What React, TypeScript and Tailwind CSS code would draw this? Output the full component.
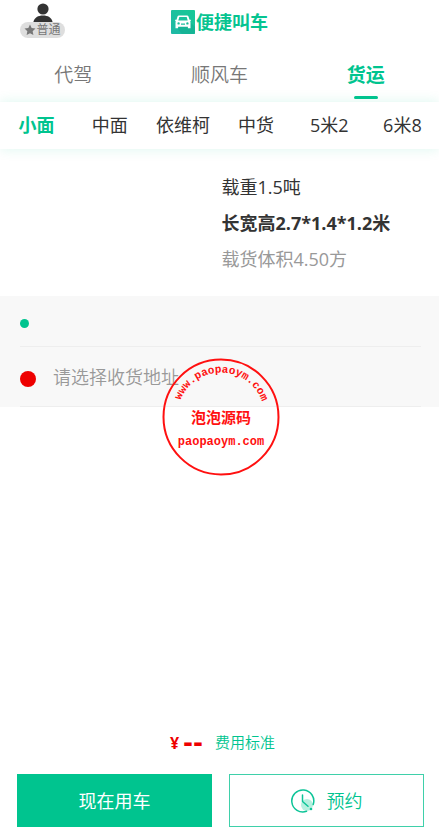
import { useState } from "react";

const services = ["代驾", "顺风车", "货运"];
const trucks = ["小面", "中面", "依维柯", "中货", "5米2", "6米8"];

function UserBadge() {
  return (
    <button type="button" className="flex flex-col items-center">
      <svg viewBox="0 0 20 19" className="h-[19px] w-5" fill="#333333">
        <circle cx="10" cy="6" r="5.6" />
        <path d="M0.4 19C1.6 14.6 5 12.6 10 12.6S18.4 14.6 19.6 19Z" />
      </svg>
      <span className="flex h-4 w-[45px] items-center justify-center rounded-full bg-[#dedede] text-xs text-[#777777]">
        <svg viewBox="0 0 24 24" className="h-3 w-3 shrink-0" fill="#777777">
          <path d="M12 1l3.3 7.2 7.7.9-5.700 5.300 1.500 7.800L12 18.300 5.200 22.200l1.500-7.800L1 9.100l7.700-.9z" />
        </svg>
        普通
      </span>
    </button>
  );
}

function Logo() {
  return (
    <div className="flex items-center gap-px">
      <svg viewBox="0 0 24 24" className="h-6 w-6">
        <defs>
          <linearGradient id="logoFill" x1="0" y1="1" x2="1" y2="0">
            <stop offset="0" stopColor="#1fb8a6" />
            <stop offset="1" stopColor="#16c995" />
          </linearGradient>
        </defs>
        <rect width="24" height="24" rx="1" fill="url(#logoFill)" />
        <path d="M19 12l5 5v7H11l-5-6z" fill="#0fa98c" opacity="0.5" />
        <path
          fillRule="evenodd"
          fill="#ffffff"
          d="M8 5.500h8c.8 0 1.300.4 1.500 1.100l1 3.200h1.300v1.400h-.8c.4.5.5 1 .5 1.600v5.400h-2.600v-1.500H7.100v1.500H4.500v-5.400c0-.6.100-1.100.5-1.600h-.8V9.800h1.300l1-3.200C6.700 5.900 7.200 5.500 8 5.500zM8.300 7l-1 3.400h9.400L15.700 7zM7.600 12.200a1.200 1.200 0 100 2.400 1.200 1.200 0 000-2.400zm8.800 0a1.200 1.200 0 100 2.400 1.200 1.200 0 000-2.400zM10 13.600v1.200h4v-1.200z"
        />
      </svg>
      <h1 className="text-lg leading-6 font-bold text-[#06c491]">便捷叫车</h1>
    </div>
  );
}

function Stamp() {
  return (
    <svg
      viewBox="0 0 118 118"
      className="h-[118px] w-[118px]"
      fill="#ff1010"
    >
      <defs>
        <path id="stampArc" d="M15.500 58A43.500 43.500 0 0 1 102.500 58" />
      </defs>
      <circle cx="59" cy="59" r="57.500" fill="none" stroke="#ff1010" strokeWidth="2" />
      <text
        fontFamily="'Liberation Mono', monospace"
        fontWeight="700"
        fontSize="11"
      >
        <textPath href="#stampArc" startOffset="16">
          www.paopaoym.com
        </textPath>
      </text>
      <text
        x="59"
        y="65"
        textAnchor="middle"
        fontFamily="'Noto Sans CJK SC', sans-serif"
        fontWeight="700"
        fontSize="15"
      >
        泡泡源码
      </text>
      <text
        x="59"
        y="87"
        textAnchor="middle"
        fontFamily="'Liberation Mono', monospace"
        fontWeight="700"
        fontSize="12"
      >
        paopaoym.com
      </text>
    </svg>
  );
}

function ClockIcon() {
  return (
    <svg viewBox="0 0 24 24" className="h-6 w-6" fill="none">
      <circle cx="16" cy="16" r="6" fill="#b5f0df" />
      <path
        d="M15.500 22.300A11 11 0 1 1 22.200 15.500"
        stroke="#0cc497"
        strokeWidth="1.500"
        strokeLinecap="round"
      />
      <path
        d="M11.500 6v6.500l5.500 4.700"
        stroke="#0cc497"
        strokeWidth="1.500"
        strokeLinecap="round"
        strokeLinejoin="round"
      />
      <circle cx="20" cy="20" r="1.300" fill="#0cc497" />
    </svg>
  );
}

function App() {
  const [service, setService] = useState("货运");
  const [truck, setTruck] = useState("小面");

  return (
    <div className="flex min-h-screen flex-col bg-white font-['Open_Sans','Noto_Sans_CJK_SC',sans-serif] text-lg font-normal text-[#333333]">
      <header className="grid h-[50px] grid-cols-[1fr_auto_1fr] items-start px-5">
        <div className="flex pt-[3px]">
          <UserBadge />
        </div>
        <div className="pt-[10px]">
          <Logo />
        </div>
      </header>

      {/* Service tabs */}
      <nav className="grid h-[52px] grid-cols-3">
        {services.map((name) => (
          <button
            key={name}
            type="button"
            onClick={() => setService(name)}
            className={
              name === service
                ? "flex flex-col items-center text-[19px] leading-[50px] font-bold text-[#00c48f]"
                : "flex flex-col items-center text-[19px] leading-[50px] font-[350] text-[#777777]"
            }
          >
            <span className="h-[46px]">{name}</span>
            {name === service && (
              <span className="h-[3px] w-6 rounded-full bg-[#00c48f]" />
            )}
          </button>
        ))}
      </nav>

      {/* Truck sizes */}
      <nav className="grid h-[47px] grid-cols-6 shadow-[0_0_12px_rgba(0,196,143,0.14)]">
        {trucks.map((name) => (
          <button
            key={name}
            type="button"
            onClick={() => setTruck(name)}
            className={
              name === truck
                ? "pb-[2px] whitespace-nowrap font-bold text-[#00c48f]"
                : "pb-[2px] whitespace-nowrap"
            }
          >
            {name}
          </button>
        ))}
      </nav>

      <section className="grid h-[147px] grid-cols-2 content-start pt-5">
        <div className="col-start-2 pl-[2px] leading-9">
          <p>载重1.5吨</p>
          <p className="font-bold">长宽高2.7*1.4*1.2米</p>
          <p className="text-[#999999]">载货体积4.50方</p>
        </div>
      </section>

      {/* Pick-up and delivery addresses */}
      <section className="relative bg-[#f8f8f8] pr-[18px] pl-5">
        <div className="flex h-[51px] items-center gap-6 border-b border-[#eeeeee] pt-1">
          <span className="h-[9px] w-[9px] shrink-0 rounded-full bg-[#00c48f]" />
          <input
            type="text"
            aria-label="发货地址"
            className="min-w-0 flex-1 bg-transparent outline-none"
          />
        </div>
        <div className="flex h-[60px] items-center gap-[17px] border-b border-[#eeeeee]">
          <span className="mt-1 h-4 w-4 shrink-0 rounded-full bg-[#ee0000]" />
          <input
            type="text"
            aria-label="收货地址"
            placeholder="请选择收货地址"
            className="min-w-0 flex-1 bg-transparent font-[350] outline-none placeholder:text-[#999999]"
          />
        </div>
        <div className="pointer-events-none absolute inset-x-0 top-[62px] flex justify-center pl-[2px]">
          <Stamp />
        </div>
      </section>

      <footer className="mt-auto pr-[15px] pb-[6px] pl-[17px]">
        <div className="flex h-[62px] items-center justify-center gap-3 pl-1">
          <p className="flex items-center gap-1 font-bold text-[#ee0000]">
            <span className="text-base">¥</span>
            <span className="font-['DejaVu_Sans',sans-serif] text-2xl leading-6">--</span>
          </p>
          <a href="#fee" className="text-[15px] font-[350] text-[#00c48f]">
            费用标准
          </a>
        </div>
        <div className="grid grid-cols-2 gap-[17px]">
          <button type="button" className="h-[53px] bg-[#00c48f] text-white">
            现在用车
          </button>
          <button
            type="button"
            className="flex h-[53px] items-center justify-center gap-3 border border-[#3fd0aa] font-[350] text-[#00c48f]"
          >
            <ClockIcon />
            预约
          </button>
        </div>
      </footer>
    </div>
  );
}

export default App;
